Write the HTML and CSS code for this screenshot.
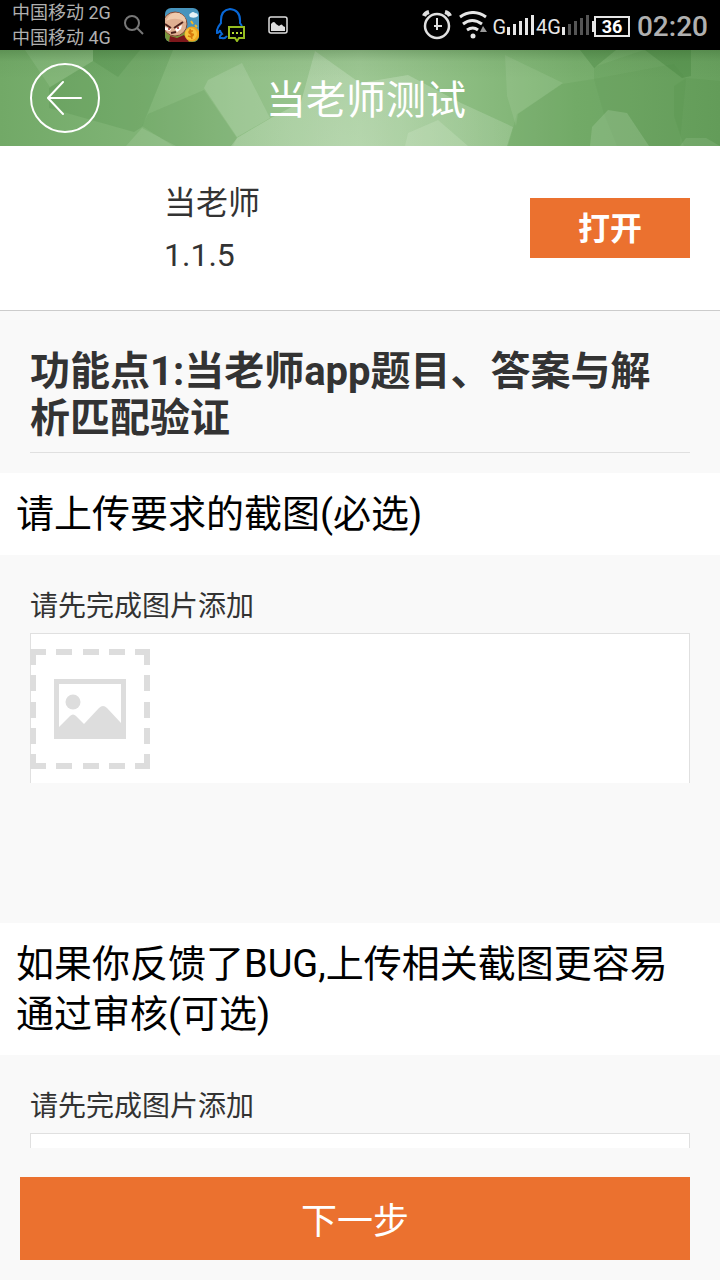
FILE: index.html
```html
<!DOCTYPE html>
<html lang="zh-CN">
<head>
<meta charset="utf-8">
<meta name="viewport" content="width=device-width, initial-scale=1">
<title>当老师测试</title>
<link rel="stylesheet" href="styles.css">
</head>
<body>
<div class="status">
  <div class="carriers"><span>中国移动 2G</span><span>中国移动 4G</span></div>
  <div class="notices">
    <svg class="search" width="20" height="20" viewBox="0 0 20 20" fill="none" stroke="#777" stroke-width="2"><circle cx="8" cy="8" r="7"/><path d="M13 13l6 6"/></svg>
    <svg width="34" height="34" viewBox="0 0 34 34">
      <defs><clipPath id="tile"><rect width="34" height="34" rx="6"/></clipPath></defs>
      <g clip-path="url(#tile)">
        <path fill="#4794bd" d="M0 0h34v34H0z"/>
        <path fill="#78963c" d="M0 23h34v11H0z"/>
        <path fill="#e6f1f6" d="M25 9q-2-3 1-4 2-2 4 0 3 0 3 3-3 3-8 1z"/>
        <circle cx="10" cy="16" r="12" fill="#dfb092" stroke="#824a35"/>
        <path fill="#efcbad" d="M1 13Q5 3 14 5q7 3 7 9Q11 8 1 13z"/>
        <path fill="#fff" d="M0 19l6 2-1 2-5-1zM10 21l7-4-1 4-4 3z"/>
        <path d="M0 16l6 4M9 20l9-6M6 25l5-1" stroke="#4c211c" stroke-width="2" fill="none"/>
        <circle cx="4" cy="21" r="1" fill="#922"/><circle cx="13" cy="20" r="1" fill="#922"/>
        <path fill="#7d171b" d="M4 34l1-6 7 2 7-3 5 7z"/>
        <path d="M26 13l2 3M30 17l2 2" stroke="#f4ba23" stroke-width="2"/>
        <circle cx="27" cy="26" r="7.500" fill="#efa51e"/><circle cx="26" cy="26" r="6" fill="#f7c33c"/>
        <path d="M28 23q-4-1-4 1t3 2-1 3l-3-1M25 21l2 10" fill="none" stroke="#d8790c" stroke-width="1.500"/>
      </g>
    </svg>
    <svg width="30" height="34" viewBox="0 0 30 34" fill="none">
      <path d="M11 28q-2 3-5 2H4q-1-2 2-4-2-2-2-4-1 3-3 3-1-4 4-10Q4 2 14 1q11 1 10 14l2 3" stroke="#0868d8" stroke-width="2"/>
      <path d="M13 19h15v11h-5l-2 3-2-3h-6z" stroke="#96bd20" stroke-width="2"/>
      <path d="M16 24h2v2h-2zm4 0h2v2h-2zm4 0h2v2h-2z" fill="#b4dc32"/>
    </svg>
    <svg class="photo" width="20" height="18" viewBox="0 0 20 18"><rect x="1" y="1" width="18" height="16" rx="2" fill="none" stroke="#ddd" stroke-width="1.500"/><path d="M3 15V8q3-4 5 0l3 2q3-3 4 0l2 1v4z" fill="#ddd"/></svg>
  </div>
  <div class="signals">
    <svg class="alarm" width="30" height="30" viewBox="0 0 30 30" fill="none" stroke="#e0e0e0"><circle cx="15" cy="16" r="12" stroke-width="2.500"/><path d="M15 8v12M12 16h8" stroke-width="2"/><path d="M2 6q1-3 5-4M28 6q-1-3-5-4" stroke-width="4"/></svg>
    <svg class="wifi" width="28" height="28" viewBox="0 0 28 28" fill="none" stroke="#e6e6e6" stroke-width="3"><path d="M1 6q13-9 26 0M4 13q9-7 19 0M8 19q6-4 11 0"/><circle cx="14" cy="25" r="2.500" fill="#e6e6e6" stroke="none"/><path d="M21 21l3-6 4 6z" fill="#999" stroke="none"/></svg>
    <span class="net">G</span>
    <svg class="bars" width="27" height="20" viewBox="0 0 27 20" fill="#e6e6e6"><path d="M0 12h3v8H0zM6 9h3v11H6zM12 6h3v14h-3zM18 3h3v17h-3zM24 0h3v20h-3z"/></svg>
    <span class="net">4G</span>
    <svg class="bars" width="27" height="20" viewBox="0 0 27 20" fill="#555"><path fill="#e6e6e6" d="M0 12h3v8H0z"/><path d="M6 9h3v11H6zM12 6h3v14h-3zM18 3h3v17h-3zM24 0h3v20h-3z"/></svg>
    <span class="battery">36</span>
    <time class="clock">02:20</time>
  </div>
</div>

<header class="topbar">
  <svg class="facets" viewBox="0 0 720 96" preserveAspectRatio="xMidYMid slice" aria-hidden="true">
    <defs>
      <linearGradient id="base"><stop offset="0" stop-color="#72a967"/><stop offset=".2" stop-color="#80b476"/><stop offset=".35" stop-color="#92c088"/><stop offset=".5" stop-color="#9dc793"/><stop offset=".65" stop-color="#8bbc80"/><stop offset=".8" stop-color="#79af6e"/><stop offset="1" stop-color="#6ea464"/></linearGradient>
      <radialGradient id="glow" gradientUnits="userSpaceOnUse" cx="350" cy="110" r="170"><stop offset="0" stop-color="#d2e7cb" stop-opacity=".35"/><stop offset="1" stop-color="#d2e7cb" stop-opacity="0"/></radialGradient>
      <linearGradient id="shade" x2="0" y2="1"><stop offset="0" stop-color="#1f4a1a" stop-opacity=".25"/><stop offset=".12" stop-color="#1f4a1a" stop-opacity=".04"/><stop offset=".3" stop-color="#1f4a1a" stop-opacity="0"/></linearGradient>
    </defs>
    <path fill="url(#base)" d="M0 0h720v96H0z"/>
    <g fill="#3d7d35">
      <path opacity=".18" d="M93 0h80l-31 77-8 5-85-24V38l44-27z"/>
      <path opacity=".18" d="M93 0h47l-22 27-25-16z"/>
      <path opacity=".12" d="M148 64l56-24 33 48-4 8h-60l-31-20z"/>
      <path opacity=".1" d="M562 34l32-5v-12l50-17h76v96h-212l9-32z"/>
      <path opacity=".08" d="M594 29l80-15 12 15-8 82h-55l-19-47z"/>
      <path opacity=".3" d="M580 0h36l-22 18zM645 0h46v26l-9 2z"/>
      <path opacity=".1" d="M674 36l12-8 34 3v65h-36l-10-30z"/>
    </g>
    <g fill="#d7ecd0">
      <path opacity=".15" d="M142 78l34 18h-50z"/>
      <path opacity=".12" d="M25 0h68v11L50 37z"/>
      <path opacity=".2" d="M204 38l4-8 34-17 28 55-33 19z"/>
      <path opacity=".2" d="M315 1l45 32 48-8 53 28 52 24-6 19H231l6-8 34-20 30-16z"/>
      <path opacity=".12" d="M505 5l58 28-45 31-2 12-9-30z"/>
      <path opacity=".25" d="M405 96l3-13 30-13 30 26z"/>
      <path opacity=".18" d="M590 96l2-19 16-17 19 3 22 33z"/>
      <path opacity=".12" d="M680 96l6-8h20l14 8z"/>
    </g>
    <path fill="url(#glow)" d="M231 96l6-8 34-20 30-16 14-51 45 32 48-8 53 28 52 24-6 19z"/>
    <path fill="url(#shade)" d="M0 0h720v96H0z"/>
  </svg>
  <button class="back" type="button" aria-label="返回">
    <svg width="36" height="36" viewBox="0 0 36 36" fill="none" stroke="#fff" stroke-width="2" stroke-linecap="round"><path d="M34 18H1M16 2L1 18l15 16"/></svg>
  </button>
  <h1 class="title">当老师测试</h1>
</header>

<main class="content">
  <section class="app">
    <div class="app-info"><span>当老师</span><span>1.1.5</span></div>
    <button class="open" type="button">打开</button>
  </section>
  <h2 class="feature">功能点1:当老师app题目、答案与解析匹配验证</h2>
  <section class="step">
    <h3 class="step-title">请上传要求的截图(必选)</h3>
    <p class="hint">请先完成图片添加</p>
    <div class="tray">
      <button class="add" type="button" aria-label="添加图片">
        <svg width="120" height="120" viewBox="0 0 120 120" fill="#ddd">
          <path d="M0 0h16v6H6v10H0zM26 0h16v6H26zM53 0h16v6H53zM79 0h16v6H79zM105 0h15v16h-6V6h-9zM0 26h6v16H0zM0 53h6v16H0zM0 79h6v16H0zM114 26h6v16h-6zM114 53h6v16h-6zM114 79h6v16h-6zM0 105h6v9h10v6H0zM26 114h16v6H26zM53 114h16v6H53zM79 114h16v6H79zM114 105h6v15h-15v-6h9z"/>
          <path fill-rule="evenodd" d="M24 30h72v60H24zM29 35v43l11-11q3-3 6 0l8 8 15-16q4-4 8 0l14 15V35z"/>
          <circle cx="43" cy="53" r="7.500"/>
        </svg>
      </button>
    </div>
  </section>
  <section class="step">
    <h3 class="step-title">如果你反馈了BUG,上传相关截图更容易通过审核(可选)</h3>
    <p class="hint">请先完成图片添加</p>
    <div class="tray"></div>
  </section>
</main>

<footer class="footer"><button class="next" type="button">下一步</button></footer>
</body>
</html>
```
FILE: styles.css
```css
* { box-sizing: border-box; }
body {
  margin: 0;
  height: 100vh;
  display: flex;
  flex-direction: column;
  overflow: hidden;
  background: #f9f9f9;
  color: #333;
  font-family: Roboto, "Noto Sans CJK SC", sans-serif;
}
h1, h2, h3, p { margin: 0; }
button { border: 0; padding: 0; font-family: inherit; cursor: pointer; }
svg { display: block; flex: none; }

.status {
  flex: none;
  height: 50px;
  padding: 0 12px;
  display: flex;
  align-items: center;
  background: #000;
  color: #b0b0b0;
}
.carriers { display: flex; flex-direction: column; font-size: 18px; line-height: 25px; white-space: nowrap; }
.notices { display: flex; align-items: center; gap: 17px; margin-left: 13px; }
.search { margin-right: 4px; }
.photo { margin-left: 5px; }
.signals { display: flex; align-items: center; margin-left: auto; }
.alarm { margin-right: 7px; }
.wifi { margin-right: 5px; }
.net { color: #e6e6e6; font-size: 20px; line-height: 24px; padding-top: 4px; }
.bars { margin: 0 2px 0 1px; }
.battery {
  position: relative;
  width: 36px;
  height: 21px;
  margin: 3px 7px 0 3px;
  border: 2px solid #e6e6e6;
  color: #fff;
  font-size: 18px;
  font-weight: 700;
  line-height: 18px;
  text-align: center;
}
.battery::before { content: ""; position: absolute; left: -4px; top: 3px; width: 2px; height: 11px; background: #e6e6e6; }
.clock { padding-top: 3px; font-size: 28px; font-weight: 500; line-height: 50px; }

.topbar {
  flex: none;
  position: relative;
  height: 96px;
  padding: 0 30px;
  display: grid;
  grid-template-columns: 70px 1fr 58px;
  align-items: center;
}
.facets { position: absolute; inset: 0; width: 100%; height: 100%; }
.back {
  position: relative;
  width: 70px;
  height: 70px;
  display: flex;
  align-items: center;
  justify-content: center;
  border: 2px solid #fff;
  border-radius: 50%;
  background: transparent;
}
.title { position: relative; padding-top: 6px; color: #fff; font-size: 40px; font-weight: 400; line-height: 60px; text-align: center; }

.content { flex: 1; min-height: 0; overflow: hidden; }
.app {
  display: flex;
  align-items: center;
  justify-content: space-between;
  padding: 29px 30px 29px 164px;
  background: #fff;
  border-bottom: 1px solid #ccc;
}
.app-info { display: flex; flex-direction: column; padding-top: 2px; font-size: 32px; line-height: 52px; }
.open { width: 160px; height: 60px; padding-bottom: 4px; background: #eb712f; color: #fff; font-size: 32px; font-weight: 700; }
.feature {
  margin: 0 30px 20px;
  padding: 37px 0 10px;
  border-bottom: 1px solid #e0e0e0;
  font-size: 40px;
  font-weight: 700;
  line-height: 47px;
}
.step-title { padding: 16px; background: #fff; color: #000; font-size: 38px; font-weight: 400; line-height: 50px; }
.hint { padding: 32px 30px 6px; font-size: 28px; line-height: 40px; }
.tray { height: 150px; margin: 0 30px 140px; padding-top: 15px; background: #fff; border: 1px solid #e0e0e0; border-bottom: 0; }
.add { display: block; margin-left: -1px; background: transparent; }

.footer { flex: none; padding: 29px 30px 20px 20px; }
.next { width: 100%; height: 83px; padding-bottom: 2px; background: #eb712f; color: #fff; font-size: 36px; }
```
